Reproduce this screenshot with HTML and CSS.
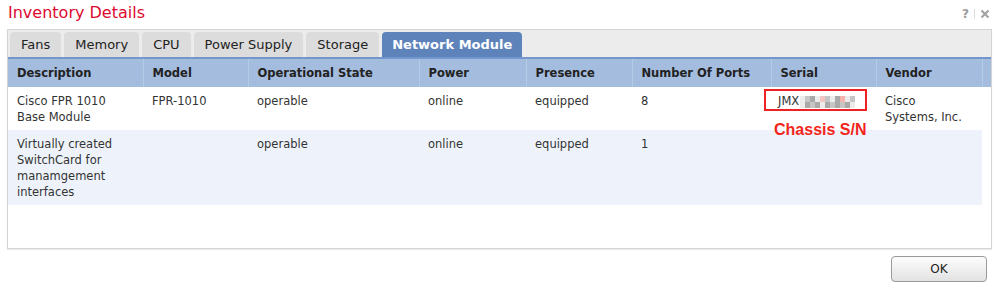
FILE: index.html
```html
<!DOCTYPE html>
<html lang="en">
<head>
    <meta charset="UTF-8">
    <title>Inventory Details</title>
    <link rel="stylesheet" href="styles.css">
</head>
<body>
    <div class="dialog">
        <!-- title bar -->
        <div class="titlebar">
            <h1>Inventory Details</h1>
            <div class="tools">
                <span class="help">?</span>
                <span class="sep"></span>
                <svg class="close" width="10" height="10" viewBox="0 0 10 10">
                    <path d="M1.5 1.5 L8.5 8.5 M8.5 1.5 L1.5 8.5" stroke="#a0a0a0" stroke-width="2" fill="none"/>
                </svg>
            </div>
        </div>

        <!-- tabs + grid -->
        <div class="panel">
            <div class="tabs">
                <div class="tab">Fans</div>
                <div class="tab">Memory</div>
                <div class="tab">CPU</div>
                <div class="tab">Power Supply</div>
                <div class="tab">Storage</div>
                <div class="tab active">Network Module</div>
            </div>
            <table class="grid">
                <colgroup>
                    <col style="width:135px">
                    <col style="width:105px">
                    <col style="width:171px">
                    <col style="width:107px">
                    <col style="width:106px">
                    <col style="width:139px">
                    <col style="width:105px">
                    <col style="width:106px">
                    <col style="width:9px">
                </colgroup>
                <thead>
                    <tr>
                        <th>Description</th>
                        <th>Model</th>
                        <th>Operational State</th>
                        <th>Power</th>
                        <th>Presence</th>
                        <th>Number Of Ports</th>
                        <th>Serial</th>
                        <th>Vendor</th>
                        <th class="filler"></th>
                    </tr>
                </thead>
                <tbody>
                    <tr>
                        <td>Cisco FPR 1010<br>Base Module</td>
                        <td>FPR-1010</td>
                        <td>operable</td>
                        <td>online</td>
                        <td>equipped</td>
                        <td>8</td>
                        <td class="serial">
                            <div class="serial-wrap">
                                JMX<span class="mosaic">
                                    <i class="m1"></i><i class="m2"></i><i class="m3"></i><i class="m1"></i><i class="m4"></i><i class="m2"></i><i class="m1"></i><i class="m3"></i><i class="m5"></i><i class="m1"></i><i class="m2"></i>
                                    <i class="m1"></i><i class="m3"></i><i class="m2"></i><i class="m3"></i><i class="m1"></i><i class="m3"></i><i class="m2"></i><i class="m3"></i><i class="m2"></i><i class="m3"></i><i class="m1"></i>
                                </span>
                                <span class="redbox"></span>
                                <span class="note">Chassis S/N</span>
                            </div>
                        </td>
                        <td>Cisco<br>Systems, Inc.</td>
                        <td class="filler"></td>
                    </tr>
                    <tr class="alt">
                        <td>Virtually created<br>SwitchCard for<br>manamgement<br>interfaces</td>
                        <td></td>
                        <td>operable</td>
                        <td>online</td>
                        <td>equipped</td>
                        <td>1</td>
                        <td></td>
                        <td></td>
                        <td class="filler"></td>
                    </tr>
                </tbody>
            </table>
        </div>

        <div class="footer">
            <button class="ok">OK</button>
        </div>
    </div>
</body>
</html>
```

FILE: styles.css
```css
body {
    margin: 0;
    background: #ffffff;
    font-family: "DejaVu Sans", Verdana, sans-serif;
    color: #333;
}
.dialog {
    width: 999px;
    height: 286px;
}
.titlebar {
    height: 29px;
    display: flex;
    justify-content: space-between;
    align-items: flex-start;
}
h1 {
    margin: 0;
    padding: 2px 0 0 8px;
    font-size: 16px;
    font-weight: normal;
    line-height: 22px;
    color: #dd0a30;
}
.tools {
    display: flex;
    align-items: center;
    gap: 4px;
    padding: 7px 9px 0 0;
    color: #9a9a9a;
    font-size: 12px;
    font-weight: bold;
}
.tools .sep {
    width: 1px;
    height: 10px;
    background: #dcdcdc;
    margin: 0 1px;
}
.panel {
    margin: 0 7px;
    border: 1px solid #d4d4d4;
    height: 218px;
    box-shadow: 0 1px 1px rgba(0, 0, 0, 0.08);
}
.tabs {
    display: flex;
    gap: 3px;
    padding: 2px 0 0 2px;
    background: #ececec;
}
.tab {
    height: 25px;
    line-height: 26px;
    padding: 0 11px;
    font-size: 13px;
    color: #222;
    background: #dcdcdc;
    border-radius: 4px 4px 0 0;
}
.tab.active {
    background: #5e83ba;
    color: #ffffff;
    font-weight: bold;
    padding: 0 10px;
}
.grid {
    width: 983px;
    table-layout: fixed;
    border-collapse: collapse;
    font-size: 11.5px;
}
.grid th {
    height: 28px;
    padding: 0 9px;
    text-align: left;
    font-weight: bold;
    color: #222;
    background: #a4bcde;
    border-top: 2px solid #7397cc;
    border-right: 1px solid #b8cbe6;
}
.grid th.filler {
    border-right: none;
}
.grid td {
    padding: 6px 9px 5px;
    line-height: 16px;
    vertical-align: top;
    color: #333;
    white-space: nowrap;
}
.grid tr.alt td {
    background: #eef3fb;
}
.grid tr.alt td.filler {
    background: #ffffff;
}
.serial-wrap {
    position: relative;
    display: flex;
    align-items: center;
    margin-left: -2px;
}
.mosaic {
    display: grid;
    grid-template-columns: repeat(11, 5px);
    grid-auto-rows: 6px;
    margin-left: 1px;
    margin-top: 2px;
}
.mosaic i {
    display: block;
}
.mosaic .m1 { background: #ececec; }
.mosaic .m2 { background: #c6c6c6; }
.mosaic .m3 { background: #a9a9a9; }
.mosaic .m4 { background: #f4c4c0; }
.mosaic .m5 { background: #f7b3ad; }
.redbox {
    position: absolute;
    left: -14px;
    top: -4px;
    width: 99px;
    height: 18px;
    border: 2px solid #ee2222;
}
.note {
    position: absolute;
    left: -4px;
    top: 29px;
    white-space: nowrap;
    font-family: "Liberation Sans", Arial, sans-serif;
    font-size: 16px;
    font-weight: bold;
    color: #f2261b;
}
.footer {
    display: flex;
    justify-content: flex-end;
    padding: 7px 12px 0 0;
}
.ok {
    width: 96px;
    height: 26px;
    font-family: "DejaVu Sans", sans-serif;
    font-size: 12px;
    color: #222;
    border: 1px solid #9a9a9a;
    border-radius: 4px;
    background: linear-gradient(#fdfdfd, #e2e2e2);
}
```
